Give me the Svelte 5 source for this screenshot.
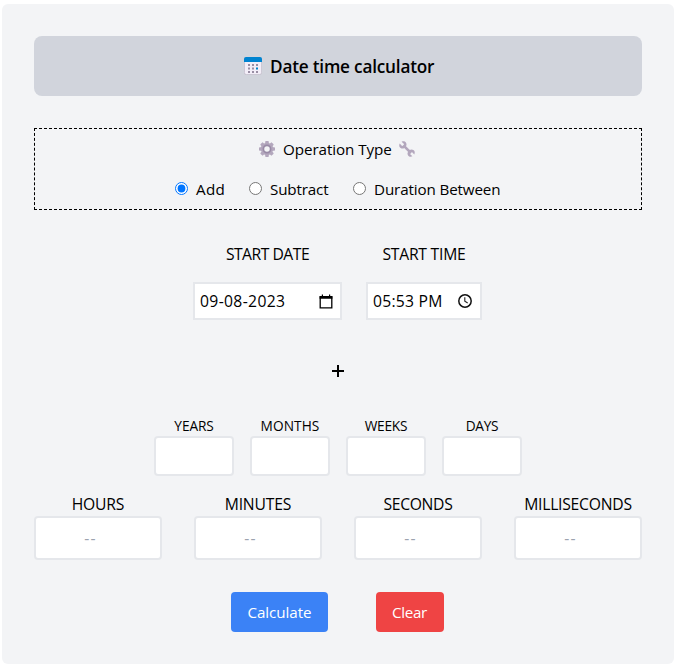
<script>
  let operation = $state('add');
  let date = $state('09-08-2023');
  let time = $state('05:53 PM');

  const operations = [
    { id: 'add', label: 'Add', width: 74, spacing: 0.35 },
    { id: 'subtract', label: 'Subtract', width: 104, spacing: -0.15 },
    { id: 'between', label: 'Duration Between', width: 148, spacing: -0.13 }
  ];

  let days = $state([
    { label: 'YEARS', spacing: -0.12, value: '' },
    { label: 'MONTHS', spacing: 0.08, value: '' },
    { label: 'WEEKS', spacing: -0.22, value: '' },
    { label: 'DAYS', spacing: -0.25, value: '' }
  ]);

  let clock = $state([
    { label: 'HOURS', spacing: -0.18, value: '' },
    { label: 'MINUTES', spacing: -0.16, value: '' },
    { label: 'SECONDS', spacing: -0.34, value: '' },
    { label: 'MILLISECONDS', spacing: -0.24, value: '' }
  ]);

  function clear() {
    for (const field of [...days, ...clock]) field.value = '';
  }
</script>

<main class="card">
  <header>
    <svg width="18" height="18" viewBox="0 0 18 18" aria-hidden="true">
      <rect x="0.4" y="0.4" width="17.2" height="17.2" rx="2" fill="#f3eef8" stroke="#c2bbc9" stroke-width="0.8" />
      <path d="M0 5V2a2 2 0 0 1 2-2h14a2 2 0 0 1 2 2v3z" fill="#0083d0" />
      <path d="M4 7h2v2H4zM8 7h2v2H8zM12 7h2v2h-2zM4 10.500h2v2H4zM8 10.500h2v2H8zM4 14h2v2H4zM8 14h2v2H8zM12 14h2v2h-2z" fill="#998ea4" />
      <path d="M12 10.500h2v2h-2z" fill="#0084ce" />
    </svg>
    <h1>Date time calculator</h1>
  </header>

  <section class="operation">
    <div class="operation-title">
      <svg width="16" height="16" viewBox="0 0 16 16" aria-hidden="true">
        <g fill="#b3a7bd">
          <rect x="6.2" y="0" width="3.6" height="16" rx="0.8" />
          <rect x="6.2" y="0" width="3.6" height="16" rx="0.8" transform="rotate(45 8 8)" />
          <rect x="6.2" y="0" width="3.6" height="16" rx="0.8" transform="rotate(90 8 8)" />
          <rect x="6.2" y="0" width="3.6" height="16" rx="0.8" transform="rotate(135 8 8)" />
          <circle cx="8" cy="8" r="6.2" />
        </g>
        <circle cx="8" cy="8" r="3.6" fill="#f3f4f6" stroke="#998ba6" stroke-width="1.7" />
      </svg>
      <h2>Operation Type</h2>
      <svg width="16" height="16" viewBox="0 0 16 16" aria-hidden="true">
        <path d="M4.4 4.4 12 12" stroke="#b3a7bd" stroke-width="2.5" />
        <path d="M2.6 0.7 5 3.1 4.6 4.6 3.1 5 0.7 2.6C-.2 4.4.3 6 1.6 6.9c1.1.8 2.6.8 3.7 0l1.6-1.6c.8-1.1.8-2.6 0-3.7C6 .3 4.4-.2 2.6.7z" fill="#b3a7bd" />
        <path d="M13.4 15.3 11 12.9l.4-1.5 1.5-.4 2.4 2.4c.9-1.8.4-3.4-.9-4.3-1.1-.8-2.6-.8-3.7 0l-1.600 1.600c-.8 1.100-.8 2.600 0 3.700.9 1.300 2.500 1.800 4.300.9z" fill="#b3a7bd" />
      </svg>
    </div>
    <div class="choices">
      {#each operations as item (item.id)}
        <label style:width="{item.width}px">
          <input type="radio" name="operation" value={item.id} bind:group={operation} />
          <span style:letter-spacing="{item.spacing}px">{item.label}</span>
        </label>
      {/each}
    </div>
  </section>

  <section class="start">
    <label class="date">
      <span>START DATE</span>
      <div class="picker">
        <input type="text" bind:value={date} />
        <svg width="14" height="15" viewBox="0 0 14 15" aria-hidden="true">
          <path d="M1.200 3h11.600v10.900H1.200z" fill="none" stroke="#000" stroke-width="1.300" />
          <path d="M.6 2h12.800v2.700H.6zM2.800.600H4V3H2.800zM10 .600h1.200V3H10z" />
        </svg>
      </div>
    </label>
    <label class="time">
      <span>START TIME</span>
      <div class="picker">
        <input type="text" bind:value={time} />
        <svg width="14" height="14" viewBox="0 0 14 14" aria-hidden="true">
          <circle cx="7" cy="7" r="6.200" fill="none" stroke="#111" stroke-width="1.500" />
          <path d="M6.800 3.200v4.100L9.700 9" fill="none" stroke="#222" stroke-width="1.100" />
        </svg>
      </div>
    </label>
  </section>

  <div class="sign">
    <svg width="12" height="12" viewBox="0 0 12 12" role="img" aria-label="plus">
      <path d="M5 0h2v5h5v2H7v5H5V7H0V5h5z" />
    </svg>
  </div>

  <section class="days">
    {#each days as field (field.label)}
      <label>
        <span style:letter-spacing="{field.spacing}px">{field.label}</span>
        <input type="text" bind:value={field.value} />
      </label>
    {/each}
  </section>

  <section class="clock">
    {#each clock as field (field.label)}
      <label>
        <span style:letter-spacing="{field.spacing}px">{field.label}</span>
        <input type="text" placeholder="--" bind:value={field.value} />
      </label>
    {/each}
  </section>

  <footer>
    <button class="calculate">Calculate</button>
    <button class="clear" onclick={clear}>Clear</button>
  </footer>
</main>

<style>
  :global(body) {
    background: #fff;
  }

  :global(#app) {
    display: flow-root;
  }

  .card,
  .card * {
    box-sizing: border-box;
  }

  .card {
    display: flex;
    flex-direction: column;
    width: 672px;
    height: 660px;
    margin: 4px 0 0 2px;
    padding: 32px;
    border-radius: 6px;
    background: #f3f4f6;
    color: #000;
    font: 15.7px/24px 'Open Sans', 'Noto Sans', sans-serif;
    white-space: nowrap;
  }

  svg {
    display: block;
    flex: none;
  }

  h1,
  h2 {
    margin: 0;
  }

  header {
    display: flex;
    align-items: center;
    gap: 8px;
    height: 60px;
    padding-left: 210px;
    border-radius: 8px;
    background: #d1d4dc;
  }

  h1 {
    padding-top: 2px;
    font-size: 17.2px;
    font-weight: 600;
    letter-spacing: -0.2px;
  }

  .operation {
    height: 82px;
    margin-top: 32px;
    padding-top: 8px;
    border: 1px dashed #000;
  }

  .operation-title {
    display: flex;
    align-items: center;
    gap: 8px;
    height: 24px;
    padding-left: 224px;
  }

  h2 {
    width: 108px;
    font-size: 15.2px;
    font-weight: 400;
    letter-spacing: -0.07px;
  }

  .choices {
    display: flex;
    height: 24px;
    margin-top: 16px;
    padding-left: 140px;
  }

  .choices label {
    display: flex;
    gap: 8px;
    font-size: 15.2px;
  }

  .choices input {
    flex: none;
    width: 13px;
    height: 13px;
    margin: 5px 0 0;
  }

  .start {
    display: flex;
    gap: 24px;
    margin-top: 32px;
    padding-left: 159px;
  }

  .start label {
    display: flex;
    flex-direction: column;
    align-items: center;
    gap: 16px;
  }

  .date {
    width: 149px;
    letter-spacing: -0.5px;
  }

  .time {
    width: 116px;
    letter-spacing: -0.24px;
  }

  .picker {
    display: flex;
    align-items: center;
    justify-content: space-between;
    width: 100%;
    height: 38px;
    padding: 0 7px 0 5px;
    border: 2px solid #e5e7eb;
    background: #fff;
  }

  .time .picker {
    padding-right: 8px;
  }

  input[type='text'] {
    min-width: 0;
    margin: 0;
    color: #000;
    font: inherit;
    outline: 0;
  }

  .picker input {
    width: 92px;
    padding: 0;
    border: 0;
    background: none;
    letter-spacing: 0.35px;
  }

  .time .picker input {
    width: 74px;
    letter-spacing: 0.25px;
  }

  .sign {
    display: flex;
    align-items: center;
    justify-content: center;
    height: 24px;
    margin-top: 39px;
  }

  .days {
    display: flex;
    gap: 16px;
    margin-top: 33px;
    padding-left: 120px;
  }

  .days label,
  .clock label {
    display: flex;
    flex-direction: column;
    align-items: center;
  }

  .days label {
    width: 80px;
    font-size: 13.7px;
    line-height: 20px;
  }

  .days input,
  .clock input {
    width: 100%;
    border: 2px solid #e5e7eb;
    border-radius: 4px;
    background: #fff;
    text-align: center;
  }

  .days input {
    height: 40px;
  }

  .clock {
    display: flex;
    gap: 32px;
    margin-top: 16px;
  }

  .clock label {
    width: 128px;
  }

  .clock input {
    height: 44px;
    padding: 0 15px 0 0;
  }

  .clock input::placeholder {
    color: #9ca3af;
    letter-spacing: 1.3px;
    opacity: 1;
  }

  footer {
    display: flex;
    gap: 48px;
    margin-top: 32px;
    padding-left: 197px;
  }

  button {
    height: 40px;
    padding: 0;
    border: 0;
    border-radius: 4px;
    color: #fff;
    font: 15.2px/24px 'Open Sans', 'Noto Sans', sans-serif;
  }

  .calculate {
    width: 97px;
    background: #3b82f6;
    letter-spacing: -0.05px;
  }

  .clear {
    width: 68px;
    padding-right: 1px;
    background: #ef4444;
    letter-spacing: -0.35px;
  }
</style>
